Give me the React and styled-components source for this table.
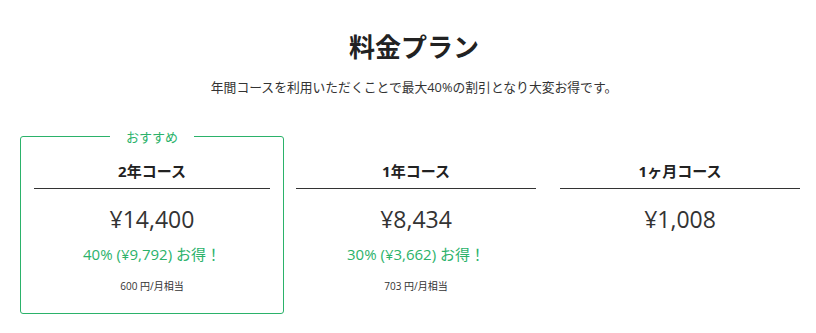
import React from "react";
import styled, { createGlobalStyle } from "styled-components";

const GlobalStyle = createGlobalStyle`
  body {
    margin: 0;
    background: #fff;
    font-family: "Open Sans", "Noto Sans CJK JP", sans-serif;
    color: #333;
  }
`;

const GREEN = "#2bb26a";

const Page = styled.div`
  padding-top: 29px;
`;

const Header = styled.header`
  padding-left: 12px;
  text-align: center;
`;

const Title = styled.h1`
  margin: 0;
  font-size: 26px;
  line-height: 36px;
  font-weight: 700;
  color: #222;
`;

const Lead = styled.p`
  margin: 12px 0 0;
  font-size: 12.8px;
  line-height: 20px;
  color: #333;
`;

const Plans = styled.div`
  display: grid;
  grid-template-columns: repeat(3, 264px);
  margin: 39px 0 0 20px;
`;

const Card = styled.div`
  position: relative;
  border: 1px solid ${(p) => (p.$recommended ? GREEN : "transparent")};
  border-radius: 3px;
  padding: 0 ${(p) => (p.$recommended ? "13px" : "11px")} 20px;
  text-align: center;
`;

const Badge = styled.span`
  position: absolute;
  top: -10px;
  left: 50%;
  transform: translateX(-50%);
  padding: 0 16px;
  background: #fff;
  color: ${GREEN};
  font-size: 13px;
  line-height: 20px;
  white-space: nowrap;
`;

const PlanName = styled.h2`
  margin: 0;
  padding: 23px 0 6px;
  border-bottom: 1px solid #333;
  font-size: 15px;
  line-height: 22px;
  font-weight: 700;
  color: #222;
`;

const Price = styled.div`
  margin-top: 14px;
  font-size: 23px;
  line-height: 32px;
  color: #333;
`;

const Saving = styled.div`
  margin-top: 8px;
  font-size: 15px;
  line-height: 22px;
  color: ${GREEN};
`;

const Monthly = styled.div`
  margin-top: 14px;
  font-size: 10px;
  line-height: 14px;
  color: #333;
`;

const plans = [
  { name: "2年コース", price: "¥14,400", saving: "40% (¥9,792) お得！", monthly: "600 円/月相当", recommended: true },
  { name: "1年コース", price: "¥8,434", saving: "30% (¥3,662) お得！", monthly: "703 円/月相当" },
  { name: "1ヶ月コース", price: "¥1,008" },
];

export default function App() {
  return (
    <>
      <GlobalStyle />
      <Page>
        <Header>
          <Title>料金プラン</Title>
          <Lead>年間コースを利用いただくことで最大40%の割引となり大変お得です。</Lead>
        </Header>
        <Plans>
          {plans.map((plan) => (
            <Card key={plan.name} $recommended={plan.recommended}>
              {plan.recommended && <Badge>おすすめ</Badge>}
              <PlanName>{plan.name}</PlanName>
              <Price>{plan.price}</Price>
              {plan.saving && <Saving>{plan.saving}</Saving>}
              {plan.monthly && <Monthly>{plan.monthly}</Monthly>}
            </Card>
          ))}
        </Plans>
      </Page>
    </>
  );
}
